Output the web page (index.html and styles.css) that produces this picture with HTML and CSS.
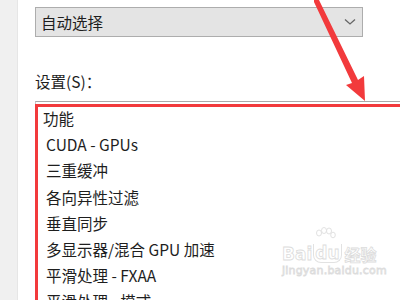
FILE: index.html
```html
<!DOCTYPE html>
<html lang="zh-CN">

<head>
    <meta charset="UTF-8">
    <meta name="viewport" content="width=device-width, initial-scale=1.0">
    <title>设置</title>
    <link rel="stylesheet" href="styles.css">
</head>

<body>
    <div class="page">
        <div class="sidebar"></div>

        <div class="main">
            <div class="select">
                <span class="select-text">自动选择</span>
                <svg class="chevron" width="12" height="8" viewBox="0 0 12 8">
                    <path d="M1 1.5 L6 6 L11 1.5" fill="none" stroke="#666" stroke-width="1.3" />
                </svg>
            </div>

            <div class="label">设置(S)：</div>

            <div class="listbox">
                <ul class="items">
                    <li class="group">功能</li>
                    <li>CUDA - GPUs</li>
                    <li>三重缓冲</li>
                    <li>各向异性过滤</li>
                    <li>垂直同步</li>
                    <li>多显示器/混合 GPU 加速</li>
                    <li>平滑处理 - FXAA</li>
                    <li>平滑处理 - 模式</li>
                </ul>
                <div class="highlight"></div>
            </div>
        </div>

        <!-- annotation arrow drawn over the screenshot -->
        <svg class="arrow" width="400" height="300" viewBox="0 0 400 300">
            <path d="M314 0 L319 0 L358 80 L364 76 L365 101 L346 85 L352 83 L314 2 Z" fill="#f23a3c" />
        </svg>

        <div class="watermark">
            <div class="wm-logo">
                <span>Bai</span>
                <span class="wm-du">
                    <svg class="wm-paw" width="26" height="16" viewBox="0 0 26 16">
                        <g fill="none" stroke="#e2e2e2" stroke-width="1">
                            <ellipse cx="7" cy="6" rx="2.5" ry="3" />
                            <ellipse cx="12" cy="3.5" rx="2.5" ry="3" />
                            <ellipse cx="17" cy="4" rx="2.5" ry="3" />
                            <ellipse cx="21" cy="8" rx="2.3" ry="2.8" />
                        </g>
                    </svg>
                    du
                </span>
                <span class="wm-cn">经验</span>
            </div>
            <div class="wm-url">jingyan.baidu.com</div>
        </div>
    </div>
</body>

</html>
```

FILE: styles.css
```css
* {
    margin: 0;
    padding: 0;
    box-sizing: border-box;
}

body {
    font-family: "Noto Sans CJK SC", "Noto Sans", sans-serif;
    color: #1e1e1e;
    background: white;
    overflow: hidden;
}

.page {
    position: relative;
    display: flex;
    width: 400px;
    height: 300px;
    overflow: hidden;
}

.sidebar {
    width: 18px;
    flex-shrink: 0;
    background: #f0f0f0;
    border-right: 1px solid #e6e6e6;
}

.main {
    flex: 1;
    padding: 7px 0 0 17px;
}

.select {
    display: flex;
    align-items: center;
    justify-content: space-between;
    width: 328px;
    height: 30px;
    padding: 0 6px 0 5px;
    background: #e4e4e4;
    border: 1px solid #adadad;
}

.select-text,
.label,
.items li {
    font-size: 15.5px;
    line-height: 26px;
}

.chevron {
    display: block;
}

.label {
    margin-top: 31px;
}

.listbox {
    position: relative;
    margin-top: 7px;
    border-top: 1px solid #a9a9a9;
    border-left: 1px solid #c8c8c8;
    height: 220px;
    margin-right: -10px;
}

.items {
    list-style: none;
    padding: 3px 0 0 10px;
}

.items li {
    height: 26.2px;
    white-space: nowrap;
}

.items .group {
    margin-left: -3px;
}

.highlight {
    position: absolute;
    top: 2px;
    left: -1px;
    width: 372px;
    height: 240px;
    border: 3px solid #f23a3c;
}

.arrow {
    position: absolute;
    top: 0;
    left: 0;
    pointer-events: none;
}

.watermark {
    position: absolute;
    left: 282px;
    top: 244px;
    color: transparent;
    -webkit-text-stroke: 0.8px #dcdcdc;
    font-family: "DejaVu Sans", sans-serif;
}

.wm-logo {
    display: flex;
    align-items: flex-end;
    font-size: 17px;
    line-height: 18px;
    font-weight: bold;
}

.wm-du {
    position: relative;
    margin-left: 1px;
    padding: 0 1px;
    border: 1px solid #e2e2e2;
    border-radius: 0 0 8px 8px;
    border-top: none;
}

.wm-paw {
    position: absolute;
    left: -2px;
    top: -17px;
}

.wm-cn {
    margin-left: 3px;
    font-family: "Noto Sans CJK SC", sans-serif;
    font-size: 16px;
}

.wm-url {
    margin-top: 2px;
    font-size: 11px;
    line-height: 12px;
    letter-spacing: 0.2px;
}
```
